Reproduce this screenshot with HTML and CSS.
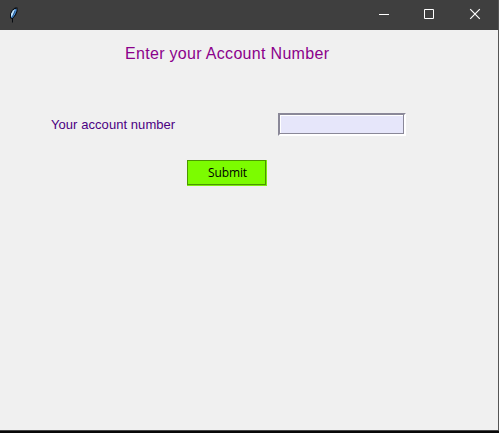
FILE: index.html
```html
<!DOCTYPE html>
<html lang="en">
<head>
<meta charset="utf-8">
<title>Account</title>
<link rel="stylesheet" href="styles.css">
</head>
<body>
<div class="window">
  <header class="titlebar">
    <svg class="feather" width="10" height="16" viewBox="0 0 10 16"><path d="M1 11V7L3 3L6 .5H8.500V4L7 8L4 11.500V15.500H3V12Z" fill="#080b10"/><path d="M2 10.500V7L4 3.500L7.500 1.500V4L6 7.500L3.500 11Z" fill="#4f93dc"/><path d="M2 9.500V7L4 3.500L6 2L5 5L3 9.500Z" fill="#c4e5fa"/><path d="M3 11L6 4" fill="none" stroke="#1b4677" stroke-width=".7"/></svg>
    <div class="controls">
      <svg width="12" height="12" viewBox="0 0 12 12"><path d="M2 6.500H12"/></svg>
      <svg width="12" height="12" viewBox="0 0 12 12"><path d="M1.500 1.500H10.500V10.500H1.500Z"/></svg>
      <svg width="12" height="12" viewBox="0 0 12 12"><path d="M1.200 1.200L10.800 10.800M10.800 1.200L1.200 10.800" stroke-width="1.200"/></svg>
    </div>
  </header>
  <main class="content">
    <h1 class="heading">Enter your Account Number</h1>
    <div class="row">
      <label class="label" for="account">Your account number</label>
      <input class="entry" id="account" type="text">
    </div>
    <button class="submit" type="button">Submit</button>
  </main>
</div>
</body>
</html>
```
FILE: styles.css
```css
* { box-sizing: border-box; }
body { margin: 0; background: #080808; font-family: "Liberation Sans", Arial, sans-serif; }
.window { height: 431px; background: #f0f0f0; border-right: 1px solid #555; border-bottom: 1px solid #484848; }
.titlebar { height: 30px; background: #3f3f3f; display: flex; justify-content: space-between; align-items: center; padding: 0 17px 2px 9px; }
.controls { display: flex; gap: 34px; }
.controls svg { fill: none; stroke: #fff; }
.feather { margin-top: 1px; }
.content { padding-top: 15px; }
.heading { margin: 0 0 0 125px; font-size: 16px; line-height: 18px; font-weight: 400; letter-spacing: .31px; color: #8b008b; white-space: nowrap; }
.row { display: flex; align-items: center; margin: 50px 0 0 51px; height: 23px; }
.label { width: 227px; font-size: 13px; letter-spacing: .06px; color: #4b0082; }
.entry { width: 128px; height: 23px; border: 2px solid; border-color: #8a8898 #fff #fff #8a8898; box-shadow: inset -1px -1px #8a8898, inset 1px 1px #fff; background: #e6e6fa; padding: 0; outline: 0; }
.submit { display: block; margin: 24px 0 0 187px; width: 80px; height: 26px; padding: 0 0 1px 1px; border: 0; background: #7cfc00; box-shadow: inset -1px -1px #7cec10, inset 1px 1px #4b9700, inset -2px -2px #4b9700; font: 12px "Open Sans", sans-serif; letter-spacing: -.1px; color: #000; }
```
